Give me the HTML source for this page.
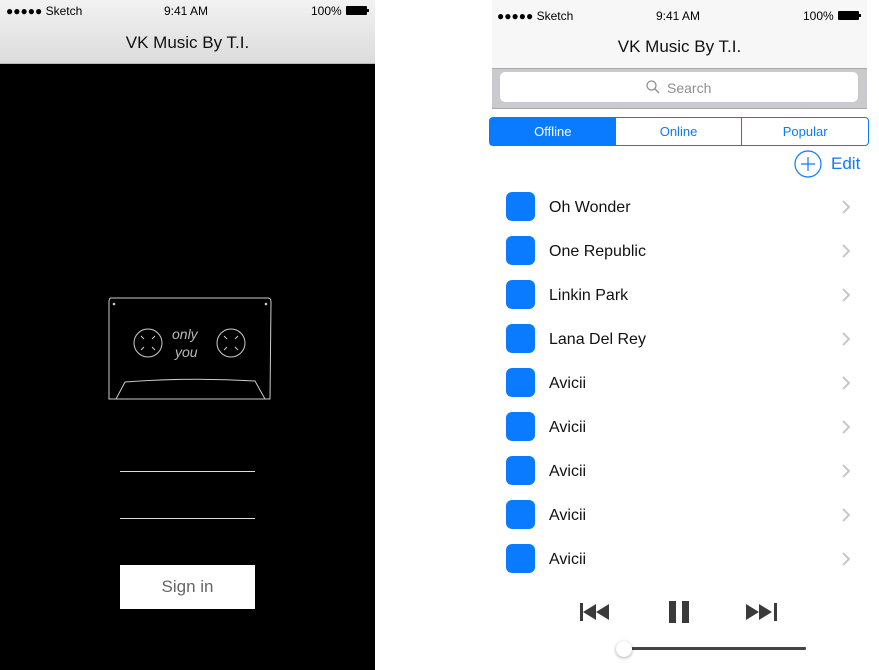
<!DOCTYPE html>
<html><head><meta charset="utf-8"><style>
*{margin:0;padding:0;box-sizing:border-box}
body{width:879px;height:670px;background:#fff;position:relative;overflow:hidden;font-family:"Liberation Sans",sans-serif}
.a{position:absolute}
.sb{font-size:12px;color:#000}
.row{position:absolute;left:506px;width:350px;height:30px}
.row .ic{position:absolute;left:0;top:0;width:29px;height:29px;border-radius:6px;background:#0a7aff}
.row .t{position:absolute;left:43px;top:7px;font-size:16px;color:#111}
.row svg{position:absolute;left:335px;top:7px}
</style></head><body>
<!-- left -->
<div class="a" style="left:0;top:0;width:375px;height:670px;background:#000"></div>
<div class="a" style="left:0;top:0;width:375px;height:64px;background:linear-gradient(#f2f2f2,#dcdcdc);border-bottom:1px solid #b8b8b8"></div>
<div class="a sb" style="left:6px;top:4px">●●●●● Sketch</div>
<div class="a sb" style="left:164px;top:4px">9:41 AM</div>
<div class="a sb" style="left:311px;top:4px">100%</div>
<div class="a" style="left:346px;top:6px;width:21px;height:9px;background:#000;border-radius:1px"></div>
<div class="a" style="left:367px;top:9px;width:2px;height:3px;background:#000"></div>
<div class="a" style="left:0;top:33px;width:375px;text-align:center;font-size:17px;color:#111">VK Music By T.I.</div>
<svg class="a" style="left:105px;top:295px" width="170" height="110" viewBox="0 0 170 110" fill="none" stroke="#ccc" stroke-width="1">
<path d="M6 3 L163 3 Q166 3 166 7 L165 104 L4 104 L4 7 Q4 3 6 3Z"/>
<path d="M11 104 L20 87 Q85 82 150 86 L160 104"/>
<circle cx="43" cy="48" r="14"/><circle cx="126" cy="48" r="14"/>
<path d="M36 41l3 3M50 41l-3 3M36 55l3-3M50 55l-3-3M119 41l3 3M133 41l-3 3M119 55l3-3M133 55l-3-3"/>
<circle cx="9" cy="9" r="0.8" fill="#ccc"/><circle cx="161" cy="9" r="0.8" fill="#ccc"/>
<text x="67" y="44" font-family="Liberation Sans" font-style="italic" font-size="14" fill="#bbb" stroke="none">only</text>
<text x="70" y="62" font-family="Liberation Sans" font-style="italic" font-size="14" fill="#bbb" stroke="none">you</text>
</svg>
<div class="a" style="left:120px;top:471px;width:135px;height:1px;background:#ddd"></div>
<div class="a" style="left:120px;top:518px;width:135px;height:1px;background:#ddd"></div>
<div class="a" style="left:120px;top:565px;width:135px;height:44px;background:#fff;text-align:center;line-height:44px;font-size:17px;color:#666">Sign in</div>
<!-- right -->
<div class="a" style="left:492px;top:0;width:375px;height:68px;background:#f7f7f7"></div>
<div class="a sb" style="left:497px;top:9px">●●●●● Sketch</div>
<div class="a sb" style="left:656px;top:9px">9:41 AM</div>
<div class="a sb" style="left:803px;top:9px">100%</div>
<div class="a" style="left:838px;top:11px;width:21px;height:9px;background:#000;border-radius:1px"></div>
<div class="a" style="left:859px;top:14px;width:2px;height:3px;background:#000"></div>
<div class="a" style="left:492px;top:37px;width:375px;text-align:center;font-size:17px;color:#111">VK Music By T.I.</div>
<div class="a" style="left:492px;top:68px;width:375px;height:41px;background:#c9c9ce;border-top:1px solid #aaa;border-bottom:1px solid #aaa"></div>
<div class="a" style="left:500px;top:72px;width:358px;height:30px;background:#fff;border-radius:5px"></div>
<svg class="a" style="left:646px;top:80px" width="14" height="14" fill="none" stroke="#8e8e93" stroke-width="1.3"><circle cx="5.5" cy="5.5" r="4.5"/><path d="M9 9l4 4"/></svg>
<div class="a" style="left:667px;top:80px;font-size:14px;color:#8e8e93">Search</div>
<div class="a" style="left:489px;top:117px;width:380px;height:29px;border:1px solid #0a7aff;border-radius:4px;display:flex;font-size:13px;color:#0a7aff">
<div style="flex:1;background:#0a7aff;color:#fff;text-align:center;line-height:28px">Offline</div>
<div style="flex:1;text-align:center;line-height:28px;border-right:1px solid #0a7aff">Online</div>
<div style="flex:1;text-align:center;line-height:28px">Popular</div></div>
<svg class="a" style="left:794px;top:150px" width="28" height="28" fill="none" stroke="#0a7aff" stroke-width="1.2"><circle cx="14" cy="14" r="13"/><path d="M14 7v14M7 14h14"/></svg>
<div class="a" style="left:831px;top:154px;font-size:17px;color:#0a7aff">Edit</div>
<div class="row" style="top:192px"><div class="ic"></div><div class="t">Oh Wonder</div><svg width="10" height="16"><path d="M2 2l6 6-6 6" fill="none" stroke="#c7c7cc" stroke-width="2"/></svg></div>
<div class="row" style="top:236px"><div class="ic"></div><div class="t">One Republic</div><svg width="10" height="16"><path d="M2 2l6 6-6 6" fill="none" stroke="#c7c7cc" stroke-width="2"/></svg></div>
<div class="row" style="top:280px"><div class="ic"></div><div class="t">Linkin Park</div><svg width="10" height="16"><path d="M2 2l6 6-6 6" fill="none" stroke="#c7c7cc" stroke-width="2"/></svg></div>
<div class="row" style="top:324px"><div class="ic"></div><div class="t">Lana Del Rey</div><svg width="10" height="16"><path d="M2 2l6 6-6 6" fill="none" stroke="#c7c7cc" stroke-width="2"/></svg></div>
<div class="row" style="top:368px"><div class="ic"></div><div class="t">Avicii</div><svg width="10" height="16"><path d="M2 2l6 6-6 6" fill="none" stroke="#c7c7cc" stroke-width="2"/></svg></div>
<div class="row" style="top:412px"><div class="ic"></div><div class="t">Avicii</div><svg width="10" height="16"><path d="M2 2l6 6-6 6" fill="none" stroke="#c7c7cc" stroke-width="2"/></svg></div>
<div class="row" style="top:456px"><div class="ic"></div><div class="t">Avicii</div><svg width="10" height="16"><path d="M2 2l6 6-6 6" fill="none" stroke="#c7c7cc" stroke-width="2"/></svg></div>
<div class="row" style="top:500px"><div class="ic"></div><div class="t">Avicii</div><svg width="10" height="16"><path d="M2 2l6 6-6 6" fill="none" stroke="#c7c7cc" stroke-width="2"/></svg></div>
<div class="row" style="top:544px"><div class="ic"></div><div class="t">Avicii</div><svg width="10" height="16"><path d="M2 2l6 6-6 6" fill="none" stroke="#c7c7cc" stroke-width="2"/></svg></div>
<svg class="a" style="left:578px;top:601px" width="204" height="22" fill="#3a3a3a">
<rect x="2" y="2" width="3" height="18"/><path d="M5 11l13-8v16zM18 11l13-8v16z"/>
<rect x="91" y="0" width="7" height="22"/><rect x="104" y="0" width="7" height="22"/>
<path d="M168 3l13 8-13 8zM181 3l13 8-13 8z"/><rect x="196" y="2" width="3" height="18"/>
</svg>
<div class="a" style="left:624px;top:647px;width:182px;height:3px;background:#444;border-radius:1px"></div>
<div class="a" style="left:616px;top:641px;width:16px;height:16px;border-radius:50%;background:#fff;box-shadow:0 1px 3px rgba(0,0,0,.35)"></div>
</body></html>
